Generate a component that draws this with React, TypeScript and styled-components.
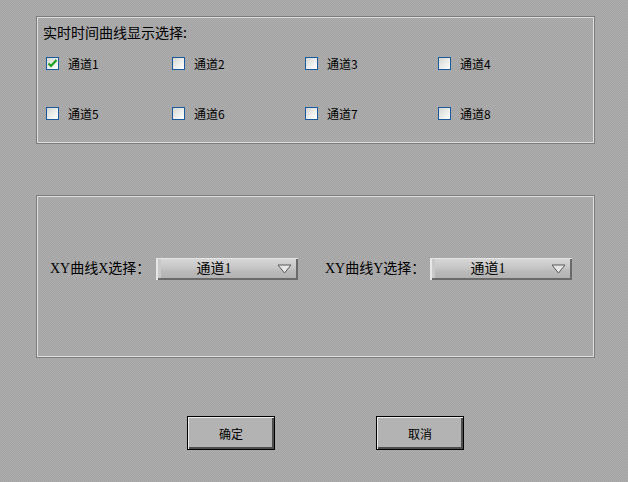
import React from "react";
import styled, { createGlobalStyle } from "styled-components";

const Global = createGlobalStyle`
  html, body { margin: 0; padding: 0; }
  body {
    width: 628px;
    height: 482px;
    overflow: hidden;
    background-color: #a8a8a8;
    background-image: repeating-conic-gradient(#a4a4a4 0 25%, #adadad 0 50%);
    background-size: 2px 2px;
    font-family: "Noto Sans CJK SC", sans-serif;
    color: #000;
  }
`;

const Page = styled.div`
  width: 628px;
  height: 482px;
  box-sizing: border-box;
  padding: 16px 33px 0 36px;
  display: flex;
  flex-direction: column;
`;

const Panel = styled.div<{ $h: number; $mt?: number }>`
  box-sizing: border-box;
  height: ${(p) => p.$h}px;
  margin-top: ${(p) => p.$mt ?? 0}px;
  border: 1px solid #7c7c7c;
  box-shadow: inset 0 0 0 1px #dedede;
  padding: 2px;
`;

const Inner = styled.div`
  padding: 5px 0 0 4px;
`;

const Title = styled.div`
  font-size: 14px;
  line-height: 16px;
  height: 16px;
`;

const Grid = styled.div`
  margin: 17px 0 0 3px;
  display: grid;
  grid-template-columns: 126px 133px 133px 1fr;
  row-gap: 37px;
`;

const Item = styled.div`
  display: flex;
  align-items: center;
  height: 13px;
`;

const Box = styled.div`
  box-sizing: border-box;
  width: 13px;
  height: 13px;
  border: 1px solid #1a5a9c;
  background: linear-gradient(135deg, #d6d6d2 0%, #ededeb 55%, #ffffff 100%);
  display: flex;
  align-items: center;
  justify-content: center;
  flex: none;
`;

const ItemLabel = styled.span`
  margin-left: 9px;
  font-size: 12px;
  line-height: 13px;
`;

const SelRow = styled.div`
  display: flex;
  align-items: center;
  padding: 60px 0 0 11px;
`;

const SelLabel = styled.span<{ $w: number }>`
  width: ${(p) => p.$w}px;
  font-family: "Liberation Serif", "Noto Sans CJK SC", serif;
  font-size: 14px;
  line-height: 22px;
  flex: none;
`;

const Drop = styled.div<{ $mr?: number }>`
  box-sizing: border-box;
  width: 142px;
  height: 22px;
  margin-right: ${(p) => p.$mr ?? 0}px;
  position: relative;
  background: linear-gradient(#d8d8d8 0%, #c6c6c6 45%, #bababa 60%, #b0b0b0 100%);
  box-shadow:
    inset 2px 1px 0 #e6e6e6,
    inset -2px -2px 0 #6a6a6a,
    inset 5px 0 0 #c9c9c9;
  display: flex;
  align-items: center;
  justify-content: center;
  flex: none;
`;

const DropText = styled.span`
  font-family: "Liberation Serif", "Noto Sans CJK SC", serif;
  font-size: 14px;
  line-height: 20px;
  margin-left: -26px;
`;

const Arrow = styled.svg`
  position: absolute;
  right: 6px;
  top: 6px;
`;

const ButtonRow = styled.div`
  display: flex;
  gap: 101px;
  padding-left: 151px;
  margin-top: 58px;
`;

const Button = styled.button`
  box-sizing: border-box;
  width: 88px;
  height: 34px;
  border: 1px solid #000;
  background: #b3b3b3;
  box-shadow: inset 1px 1px 0 #ececec, inset -2px -2px 0 #4e4e4e;
  font-family: "Noto Sans CJK SC", sans-serif;
  font-size: 12px;
  padding: 0;
  color: #000;
`;

const Check = () => (
  <svg width="11" height="11" viewBox="0 0 11 11">
    <path d="M1.5 5.5 L4 8 L9.5 2" fill="none" stroke="#1fa01f" strokeWidth="2.2" />
  </svg>
);

const channels = [1, 2, 3, 4, 5, 6, 7, 8];

const Select = ({ mr }: { mr?: number }) => (
  <Drop $mr={mr}>
    <DropText>通道1</DropText>
    <Arrow width="15" height="10" viewBox="0 0 15 10">
      <path d="M1 1 L14 1 L7.5 9 Z" fill="#e6e6e6" stroke="#5a5a5a" strokeWidth="1" />
    </Arrow>
  </Drop>
);

export default function App() {
  return (
    <>
      <Global />
      <Page>
        <Panel $h={128}>
          <Inner>
            <Title>实时时间曲线显示选择:</Title>
            <Grid>
              {channels.map((c) => (
                <Item key={c}>
                  <Box>{c === 1 && <Check />}</Box>
                  <ItemLabel>通道{c}</ItemLabel>
                </Item>
              ))}
            </Grid>
          </Inner>
        </Panel>
        <Panel $h={163} $mt={51}>
          <SelRow>
            <SelLabel $w={106}>XY曲线X选择：</SelLabel>
            <Select mr={27} />
            <SelLabel $w={105}>XY曲线Y选择：</SelLabel>
            <Select />
          </SelRow>
        </Panel>
        <ButtonRow>
          <Button>确定</Button>
          <Button>取消</Button>
        </ButtonRow>
      </Page>
    </>
  );
}
